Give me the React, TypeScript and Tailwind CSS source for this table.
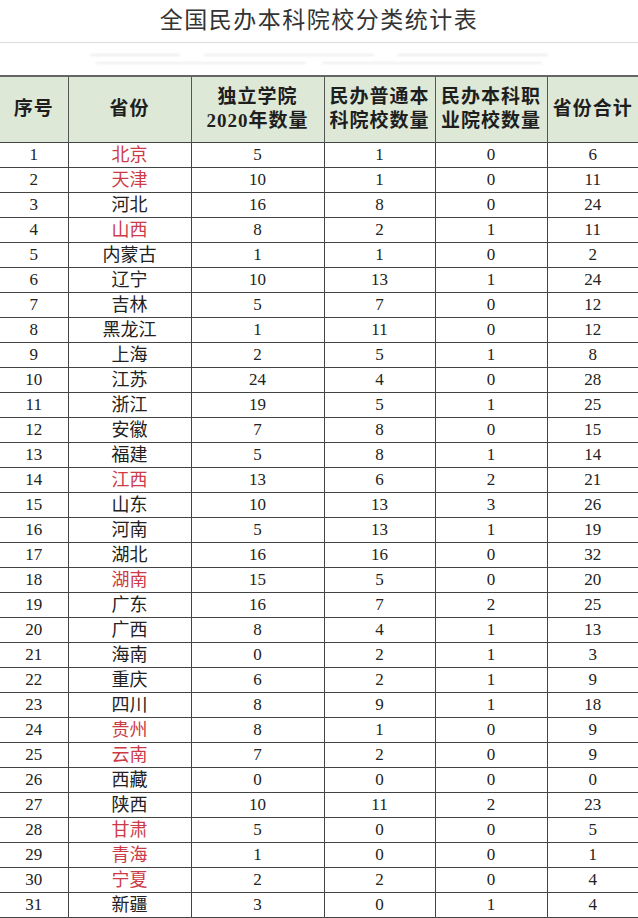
import React from "react";

const rows: [number, string, number, number, number, number][] = [
  [1, "北京", 5, 1, 0, 6],
  [2, "天津", 10, 1, 0, 11],
  [3, "河北", 16, 8, 0, 24],
  [4, "山西", 8, 2, 1, 11],
  [5, "内蒙古", 1, 1, 0, 2],
  [6, "辽宁", 10, 13, 1, 24],
  [7, "吉林", 5, 7, 0, 12],
  [8, "黑龙江", 1, 11, 0, 12],
  [9, "上海", 2, 5, 1, 8],
  [10, "江苏", 24, 4, 0, 28],
  [11, "浙江", 19, 5, 1, 25],
  [12, "安徽", 7, 8, 0, 15],
  [13, "福建", 5, 8, 1, 14],
  [14, "江西", 13, 6, 2, 21],
  [15, "山东", 10, 13, 3, 26],
  [16, "河南", 5, 13, 1, 19],
  [17, "湖北", 16, 16, 0, 32],
  [18, "湖南", 15, 5, 0, 20],
  [19, "广东", 16, 7, 2, 25],
  [20, "广西", 8, 4, 1, 13],
  [21, "海南", 0, 2, 1, 3],
  [22, "重庆", 6, 2, 1, 9],
  [23, "四川", 8, 9, 1, 18],
  [24, "贵州", 8, 1, 0, 9],
  [25, "云南", 7, 2, 0, 9],
  [26, "西藏", 0, 0, 0, 0],
  [27, "陕西", 10, 11, 2, 23],
  [28, "甘肃", 5, 0, 0, 5],
  [29, "青海", 1, 0, 0, 1],
  [30, "宁夏", 2, 2, 0, 4],
  [31, "新疆", 3, 0, 1, 4],
];

const red = new Set(["北京", "天津", "山西", "江西", "湖南", "贵州", "云南", "甘肃", "青海", "宁夏"]);

const font = { fontFamily: '"Liberation Serif", "Noto Sans CJK SC", serif' };

const th = "border-x border-[#555] bg-[#dde8d6] text-[19px] font-bold leading-[24px] tracking-[1px] text-[#1e1e1e] text-center align-middle";
const td = "border border-[#444] border-t-0 h-[25px] p-0 text-center align-middle text-[17px] leading-[24px] text-[#222]";

const App = () => {
  return (
    <div className="w-[638px] h-[918px] overflow-hidden bg-white" style={font}>
      <div className="h-[43px] border-b border-[#dcdcdc] flex items-center justify-center">
        <h1 className="text-[23px] tracking-[1.5px] text-[#333] font-normal">全国民办本科院校分类统计表</h1>
      </div>

      {/* washed-out subtitle */}
      <div className="h-[32px] flex flex-col justify-center items-center gap-[6px] opacity-40">
        <div className="flex gap-6">
          <div className="w-[90px] h-[2px] bg-[#cfcfcf] blur-[1px]" />
          <div className="w-[170px] h-[2px] bg-[#d4d4d4] blur-[1px]" />
          <div className="w-[150px] h-[2px] bg-[#d0d0d0] blur-[1px]" />
        </div>
        <div className="flex gap-4">
          <div className="w-[210px] h-[2px] bg-[#d8d8d8] blur-[1px]" />
          <div className="w-[220px] h-[2px] bg-[#d8d8d8] blur-[1px]" />
        </div>
      </div>

      <table className="w-[638px] border-collapse table-fixed border-t-2 border-t-[#666]">
        <colgroup>
          <col className="w-[68px]" />
          <col className="w-[123px]" />
          <col className="w-[133px]" />
          <col className="w-[111px]" />
          <col className="w-[112px]" />
          <col className="w-[91px]" />
        </colgroup>
        <thead>
          <tr className="h-[66px] border-b border-[#444]">
            <th className={th + " border-l-0"}>序号</th>
            <th className={th}>省份</th>
            <th className={th}>独立学院<br />2020年数量</th>
            <th className={th + " tracking-[0.5px]"}>民办普通本<br />科院校数量</th>
            <th className={th + " tracking-[0.5px]"}>民办本科职<br />业院校数量</th>
            <th className={th + " border-r-0"}>省份合计</th>
          </tr>
        </thead>
        <tbody>
          {rows.map(([n, p, a, b, c, t]) => (
            <tr key={n}>
              <td className={td + " border-l-0"}>{n}</td>
              <td className={td + " text-[18px]" + (red.has(p) ? " text-[#cc3b47]" : "")}>{p}</td>
              <td className={td}>{a}</td>
              <td className={td}>{b}</td>
              <td className={td}>{c}</td>
              <td className={td + " border-r-0"}>{t}</td>
            </tr>
          ))}
        </tbody>
      </table>
    </div>
  );
};

export default App;
